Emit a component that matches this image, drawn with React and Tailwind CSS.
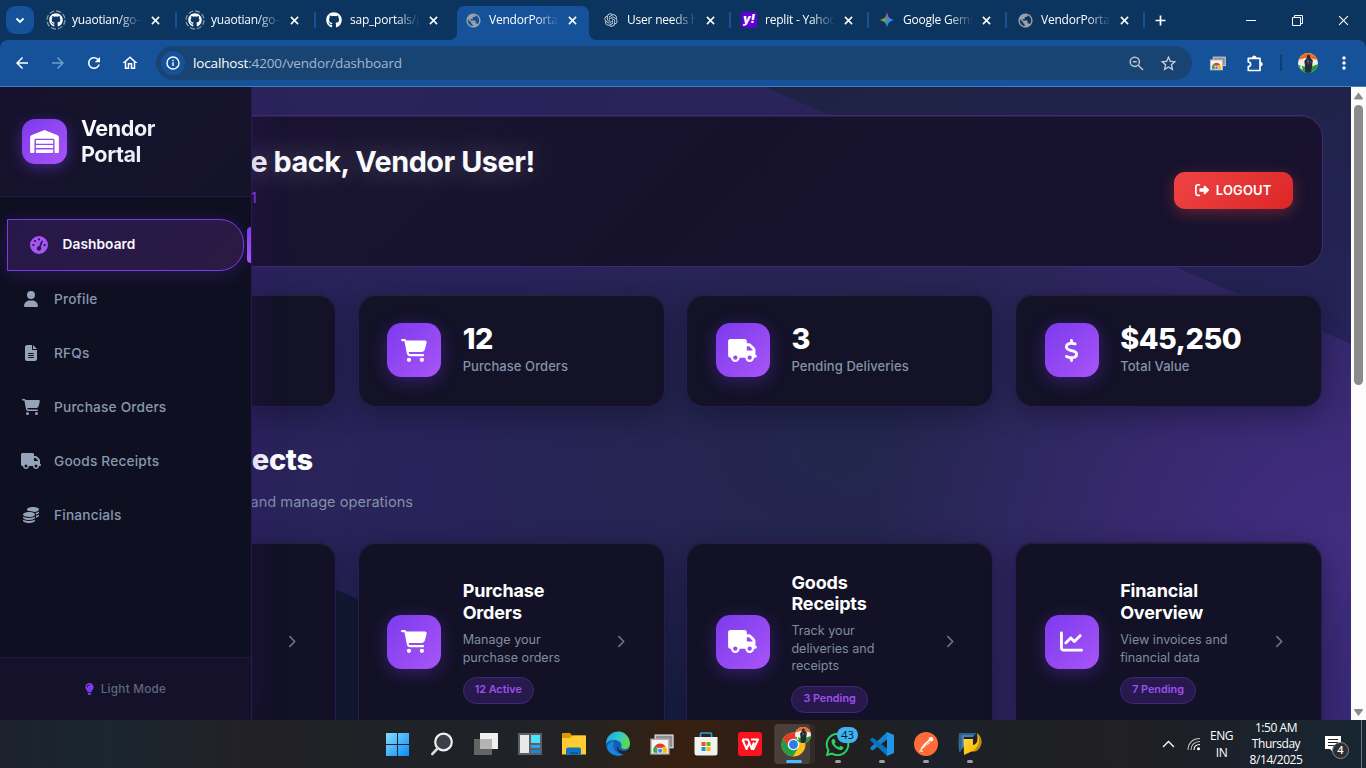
import React from "react";
import {
  FaWarehouse, FaGaugeHigh, FaUser, FaFileLines, FaCartShopping, FaTruck, FaCoins,
  FaLightbulb, FaRightFromBracket, FaDollarSign, FaChartLine, FaChevronRight, FaGithub, FaWhatsapp,
} from "react-icons/fa6";
import { RiOpenaiFill } from "react-icons/ri";
import { MdArrowBack, MdArrowForward, MdRefresh, MdOutlineHome, MdStarBorder, MdMoreVert, MdPublic } from "react-icons/md";

const ui = "font-['Open_Sans','Noto_Sans',sans-serif]";

function GithubRing() {
  return (
    <span className="relative flex size-5 items-center justify-center">
      <svg className="absolute inset-0" viewBox="0 0 20 20" width="20" height="20">
        <circle cx="10" cy="10" r="9" fill="none" stroke="#7f99b5" strokeWidth="1.3" strokeDasharray="5 2.07" />
      </svg>
      <FaGithub className="size-[14px] text-white" />
    </span>
  );
}

function Yahoo() {
  return (
    <span className="flex size-4 items-center justify-center bg-[#5f01d1] font-['Inter',sans-serif] text-[12px] leading-none font-black text-white italic">
      <span className="-mt-0.5">y!</span>
    </span>
  );
}

function Gemini() {
  return (
    <svg width="16" height="16" viewBox="0 0 16 16">
      <defs>
        <linearGradient id="gm" x1="0" y1="0" x2="1" y2="0">
          <stop offset="0.1" stopColor="#fbbc04" />
          <stop offset="0.4" stopColor="#34a87a" />
          <stop offset="0.6" stopColor="#3186ff" />
          <stop offset="1" stopColor="#4f8dff" />
        </linearGradient>
        <linearGradient id="gm2" x1="0" y1="0" x2="0" y2="1">
          <stop offset="0.1" stopColor="#f4453b" />
          <stop offset="0.5" stopColor="#f4453b" stopOpacity="0" />
        </linearGradient>
      </defs>
      <path d="M8 0.5C8.7 5 11 7.3 15.5 8 11 8.7 8.7 11 8 15.5 7.3 11 5 8.7 0.5 8 5 7.3 7.3 5 8 0.5Z" fill="url(#gm)" />
      <path d="M8 0.5C8.7 5 11 7.3 15.5 8 11 8.7 8.7 11 8 15.5 7.3 11 5 8.7 0.5 8 5 7.3 7.3 5 8 0.5Z" fill="url(#gm2)" />
    </svg>
  );
}

const Globe = () => <MdPublic className="size-[17px] text-[#9aa0a6]" />;

const tabs = [
  { t: "yuaotian/go-c", i: <GithubRing />, w: "w-[139px]", sep: false },
  { t: "yuaotian/go-c", i: <GithubRing />, w: "w-[139px]", sep: true },
  { t: "sap_portals/pr", i: <FaGithub className="size-4 text-white" />, w: "w-[139px]", sep: true },
  { t: "VendorPortal", i: <Globe />, w: "w-[138px]", active: true },
  { t: "User needs he", i: <RiOpenaiFill className="size-4 text-[#c5d0dc]" />, w: "w-[138px]" },
  { t: "replit - Yahoo", i: <Yahoo />, w: "w-[138px]", sep: true },
  { t: "Google Gemini", i: <Gemini />, w: "w-[138px]", sep: true },
  { t: "VendorPortal", i: <Globe />, w: "w-[138px]", sep: true },
];

function Cross({ s = 9, w = 1.7 }) {
  return (
    <svg width={s} height={s} viewBox="0 0 10 10">
      <path d="M1 1L9 9M9 1L1 9" stroke="#fff" strokeWidth={w} />
    </svg>
  );
}

function TabStrip() {
  return (
    <div className="flex h-10 shrink-0 items-stretch bg-[#0b345f] text-white">
      <div className="flex w-[37px] items-center pl-1.5">
        <div className="flex h-7 w-7 items-center justify-center rounded-[9px] bg-[#15529a]">
          <svg width="10" height="7" viewBox="0 0 10 7"><path d="M1.5 1.5L5 5L8.5 1.5" fill="none" stroke="#fff" strokeWidth="1.8" /></svg>
        </div>
      </div>
      {tabs.map((tab, k) => (
        <div key={k} className={"relative flex shrink-0 items-center " + tab.w}>
          {tab.sep && <span className="absolute top-3 left-[-1px] h-4 w-[2px] bg-[#15529a]" />}
          {tab.active && (
            <svg className="absolute bottom-0 left-[-5px]" width="148" height="34" viewBox="0 0 148 34">
              <path d="M0 34C5 34 8 31 8 26V8Q8 0 16 0H132Q140 0 140 8V26C140 31 143 34 148 34Z" fill="#15529a" />
            </svg>
          )}
          <span className="relative ml-[9px] flex w-5 items-center justify-center">{tab.i}</span>
          <span className={"relative ml-[6px] w-[70px] overflow-hidden text-[12px] tracking-[-0.22px] whitespace-nowrap [mask-image:linear-gradient(to_right,black_65%,transparent_100%)] " + ui}>
            {tab.t}
          </span>
          <span className="relative ml-[9px] flex items-center"><Cross /></span>
        </div>
      ))}
      <div className="relative flex w-[33px] items-center justify-center">
        <span className="absolute top-3 left-[-1px] h-4 w-[2px] bg-[#15529a]" />
        <svg width="11" height="11" viewBox="0 0 11 11"><path d="M5.5 0.5V10.5M0.5 5.5H10.5" stroke="#fff" strokeWidth="1.7" /></svg>
      </div>
      <div className="ml-auto flex">
        <div className="flex w-[46px] items-center justify-center"><span className="h-px w-[10px] bg-white" /></div>
        <div className="flex w-[46px] items-center justify-center">
          <svg width="11" height="11" viewBox="0 0 11 11" fill="none" stroke="#fff"><path d="M.5 2.5H8.5V10.5H.5ZM2.5 2.5V.5H10.5V8.5H8.5" /></svg>
        </div>
        <div className="flex w-[46px] items-center justify-center"><Cross s={11} w={1} /></div>
      </div>
    </div>
  );
}

function ChromeSnap({ size = 18 }) {
  return (
    <svg width={size} height={size} viewBox="0 0 24 24">
      <rect x="6" y="3" width="17" height="12" fill="#8f8f8f" stroke="#d2d2d2" strokeWidth="1.4" />
      <rect x="2" y="7" width="17" height="14" fill="#f4f4f4" stroke="#b5b5b5" strokeWidth="1.4" />
      <path d="M4.500 20A6 6 0 0 1 6 13.200L9.500 17.500L8.500 20Z" fill="#34a853" />
      <path d="M5.500 13.800A6.200 6.200 0 0 1 15.800 13.800L10.500 16Z" fill="#e5392e" />
      <path d="M15.800 13.800A6 6 0 0 1 16.800 20H12V15Z" fill="#fbbc04" />
      <circle cx="10.700" cy="18" r="2.500" fill="#4285f4" stroke="#fff" strokeWidth=".8" />
    </svg>
  );
}

function Avatar({ size }) {
  return (
    <svg width={size} height={size} viewBox="0 0 20 20">
      <defs><clipPath id={"av" + size}><circle cx="10" cy="10" r="10" /></clipPath></defs>
      <g clipPath={"url(#av" + size + ")"}>
        <rect width="20" height="20" fill="#f3efe8" />
        <path d="M0 0H20V7L13 5.500L7 5L0 7Z" fill="#ef6c1a" />
        <path d="M0 12L6 13.500H14L20 11V20H0Z" fill="#1f9a2c" />
        <path d="M3 11L5 17L2 15Z" fill="#eef5e8" />
        <path d="M9 2.500Q10.500 1 12 2.500L12.300 5L14.800 7L14.200 13L12.800 20H7.200L7 13L6.300 8L8.800 5Z" fill="#262a38" />
        <path d="M9 6L11 8L10 12Z" fill="#65708a" />
        <path d="M12 7L13.500 9L12.500 11Z" fill="#4b546c" />
      </g>
    </svg>
  );
}

function Toolbar() {
  return (
    <div className="flex h-[47px] shrink-0 items-center rounded-t-lg border-b border-[#4a7db8] bg-[#15529a] text-white">
      <div className="flex items-center gap-[18px] pl-[13px] text-[18px]">
        <MdArrowBack /><MdArrowForward className="text-[#6f9ccb]" /><MdRefresh /><MdOutlineHome />
      </div>
      <div className="ml-[17px] flex h-[34px] w-[1036px] items-center rounded-full bg-[#184474] pl-[5px]">
        <span className="flex size-6 items-center justify-center rounded-full bg-[#15529a]">
          <svg width="14" height="14" viewBox="0 0 14 14"><circle cx="7" cy="7" r="6" fill="none" stroke="#fff" strokeWidth="1.4" /><path d="M7 6.2V10M7 3.8V5.2" stroke="#fff" strokeWidth="1.4" /></svg>
        </span>
        <span className={"ml-2 text-[13.5px] tracking-[-0.15px] whitespace-nowrap text-[#a3b7cf] " + ui}>
          <span className="text-white">localhost</span>:4200/vendor/dashboard
        </span>
        <svg className="ml-auto" width="15" height="15" viewBox="0 0 15 15" fill="none" stroke="#b9c4d1" strokeWidth="1.500">
          <circle cx="5.800" cy="5.800" r="4.600" /><path d="M9.200 9.200L14 14M3.800 5.800H7.800" />
        </svg>
        <MdStarBorder className="mr-[14px] ml-[15px] size-[19px] text-[#c8d0da]" />
      </div>
      <span className="ml-[17px]"><ChromeSnap size={17} /></span>
      <svg className="ml-[21px]" width="17" height="17" viewBox="0 0 17 17" fill="none" stroke="#fff" strokeWidth="1.700" strokeLinejoin="round">
        <path d="M1.300 3.300H13V15.500H1.300V11.600A2.300 2.300 0 0 0 1.300 7Z" />
        <path d="M5.300 3A1.900 2 0 0 1 9.100 3ZM13.300 7.300A2 1.900 0 0 1 13.300 11.100Z" fill="#fff" strokeWidth="1" />
      </svg>
      <span className="ml-[16px] h-4 w-[2px] bg-[#0f3d70]" />
      <span className="ml-[16px]"><Avatar size={20} /></span>
      <MdMoreVert className="ml-[16px] size-5" />
    </div>
  );
}

const navItems = [
  { t: "Profile", I: FaUser, c: "size-4" },
  { t: "RFQs", I: FaFileLines, c: "size-4" },
  { t: "Purchase Orders", I: FaCartShopping, c: "h-4 w-[18px]" },
  { t: "Goods Receipts", I: FaTruck, c: "h-4 w-5" },
  { t: "Financials", I: FaCoins, c: "h-4 w-4" },
];

function Sidebar() {
  return (
    <aside className="absolute top-0 left-0 z-10 flex h-full w-[252px] flex-col overflow-hidden border-r border-[#281c4c] bg-[#0f0f22] shadow-[4px_0_30px_rgba(60,20,120,0.25)]">
      <div className="flex h-[110px] shrink-0 items-center gap-[14px] border-b border-[#231846] bg-[linear-gradient(135deg,#16122d,#15132a)] pl-[22px]">
        <div className="flex size-[45px] items-center justify-center rounded-[13px] bg-[linear-gradient(135deg,#7c3aed,#a855f7)] shadow-[0_4px_14px_rgba(124,58,237,0.45)]">
          <FaWarehouse className="h-[23px] w-[29px] text-white" />
        </div>
        <div className="-mt-[2px] bg-[linear-gradient(135deg,#ffffff,#e2e8f0)] bg-clip-text text-[21.6px] leading-[26px] font-bold tracking-[-0.45px] text-transparent">
          Vendor<br />Portal
        </div>
      </div>
      <nav className="flex flex-1 flex-col pt-[22px]">
        <div className="flex items-center">
          <div className="ml-[7px] flex h-[52px] w-[237px] items-center rounded-r-[24px] border border-[#7c3aed] bg-[linear-gradient(135deg,#27184a,#2b1a43)] pl-[22px] shadow-[0_4px_18px_rgba(124,58,237,0.2)]">
            <FaGaugeHigh className="size-[18px] text-[#a855f7]" />
            <span className="-mt-[1px] ml-[14.500px] text-[13.7px] font-semibold tracking-[0.08px] text-[#f8fafc]">Dashboard</span>
          </div>
          <div className="ml-[3px] h-9 w-1 rounded-l bg-[linear-gradient(180deg,#7c3aed,#a855f7)]" />
        </div>
        <div className="mt-[1px] flex flex-col">
          {navItems.map(({ t, I, c }) => (
            <div key={t} className="flex h-[54px] items-center pl-[20px] text-[#94a3b8]">
              <span className="flex w-[21px] justify-center"><I className={c} /></span>
              <span className="ml-[13px] text-[13.7px] font-medium tracking-[0.18px] text-[#8897ac]">{t}</span>
            </div>
          ))}
        </div>
      </nav>
      <div className="flex h-[63px] shrink-0 items-center justify-center gap-[7px] border-t border-[#231846] bg-[#15112a]">
        <FaLightbulb className="-mt-[1px] h-3 w-[9px] text-[#7c3aed]" />
        <span className="pt-[1px] text-[11.7px] font-medium tracking-[0.28px] text-[#5d6a80]">Light Mode</span>
      </div>
    </aside>
  );
}

function Tile({ children }) {
  return (
    <div className="flex size-[54px] shrink-0 items-center justify-center rounded-[14.4px] bg-[linear-gradient(135deg,#7c3aed,#a855f7)] text-white shadow-[0_4px_18px_rgba(124,58,237,0.35)]">
      {children}
    </div>
  );
}

const stats = [
  { n: "8", l: "RFQs", i: <FaFileLines className="size-6" /> },
  { n: "12", l: "Purchase Orders", i: <FaCartShopping className="h-[23px] w-[26px]" /> },
  { n: "3", l: "Pending Deliveries", i: <FaTruck className="h-[23px] w-[29px]" /> },
  { n: "$45,250", l: "Total Value", i: <FaDollarSign className="h-[23px] w-[15px]" /> },
];

const actions = [
  { t: "RFQs", d: "View and respond", b: "8 Open", i: <FaFileLines className="size-6" /> },
  { t: "Purchase Orders", d: "Manage your purchase orders", b: "12 Active", i: <FaCartShopping className="h-[23px] w-[26px]" /> },
  { t: "Goods Receipts", d: "Track your deliveries and receipts", b: "3 Pending", i: <FaTruck className="h-[23px] w-[29px]" /> },
  { t: "Financial Overview", d: "View invoices and financial data", b: "7 Pending", i: <FaChartLine className="h-[23px] w-[23px]" /> },
];

const cardCls = "border border-[#2b1b54] rounded-[18px] shadow-[0_8px_28px_rgba(10,10,25,0.4),inset_0_1px_0_rgba(255,255,255,0.08)]";

function Backdrop() {
  return (
    <div className="absolute inset-0 bg-[radial-gradient(ellipse_480px_420px_at_100%_72%,#432d82_0%,transparent_100%),radial-gradient(ellipse_420px_260px_at_62%_58%,#22264c_0%,transparent_100%),radial-gradient(ellipse_300px_160px_at_50%_100%,#171f42_0%,transparent_100%),linear-gradient(100deg,#2c2459_0%,#28235a_35%,#2b2458_75%,#27245a_100%)]">
      <svg className="absolute inset-0" width="1351" height="633" viewBox="0 0 1351 633">
        <defs>
          <linearGradient id="wedge" x1="0" y1="0" x2="1" y2="1">
            <stop offset="0" stopColor="#1e2345" />
            <stop offset="0.5" stopColor="#1f2349" />
            <stop offset="1" stopColor="#26235a" />
          </linearGradient>
        </defs>
        <path d="M765 0L1351 257V0Z" fill="url(#wedge)" />
        <path d="M250 466L640 633H250Z" fill="#131c36" />
        <path d="M1351 503L1295 633H1351Z" fill="#39297a" opacity="0.6" />
      </svg>
    </div>
  );
}

function Content() {
  return (
    <main className="relative h-full w-[1351px] shrink-0 overflow-hidden bg-[#28235a]">
      <Backdrop />
      <div className="relative pt-[28px] pr-[28.8px] pl-[28.8px]">
        <header className="mr-[-0.5px] flex h-[152px] items-center justify-between rounded-[22px] border border-[#40287a] bg-[linear-gradient(135deg,#1b1434,#16122c_50%,#18122e)] pr-[28.8px] shadow-[inset_0_1px_0_rgba(255,255,255,0.08)]">
          <div className="w-[505px] self-start pt-[26px]">
            <h1 className="text-right text-[28.8px] leading-[40px] font-bold tracking-[-0.45px] whitespace-nowrap text-[#f8fafc] [text-shadow:0_0_30px_rgba(255,255,255,0.35)]">Welcome back, Vendor User!</h1>
            <p className="w-[227px] pt-[5px] text-right text-[14.4px] leading-[22px] font-medium whitespace-nowrap text-[#7c3aed]">Vendor ID: 0000100001</p>
          </div>
          <button className="-mt-[2px] flex h-[37px] w-[119px] items-center justify-center gap-[6.500px] rounded-[10.8px] bg-[linear-gradient(135deg,#ef4444,#dc2626)] text-[13px] font-semibold tracking-[0.15px] text-white shadow-[0_4px_15px_rgba(239,68,68,0.35)]">
            <FaRightFromBracket className="size-[14px]" /><span className="pt-[1px]">LOGOUT</span>
          </button>
        </header>
        <section className="mt-[27.4px] grid grid-cols-4 gap-[21.6px]">
          {stats.map((s) => (
            <div key={s.l} className={"flex h-[113px] items-center gap-[21.6px] bg-[#131227] pb-[1px] pl-[28.5px] " + cardCls}>
              <Tile>{s.i}</Tile>
              <div>
                <div className="text-[28.8px] leading-[32px] font-extrabold tracking-[-0.45px] text-white">{s.n}</div>
                <div className="text-[13px] leading-[23px] font-medium tracking-[0.08px] text-[#8593a8]">{s.l}</div>
              </div>
            </div>
          ))}
        </section>
        <section>
          <h2 className="mt-[34.6px] w-[284px] text-right text-[29px] leading-[36px] font-extrabold tracking-[-0.3px] whitespace-nowrap text-white">Business Objects</h2>
          <p className="mt-[13px] w-[384.2px] text-right text-[14.6px] leading-[22px] whitespace-nowrap text-[#8290a8]">Access your vendor data and manage operations</p>
          <div className="mt-[29px] grid grid-cols-4 gap-[21.6px]">
            {actions.map((a) => (
              <div key={a.t} className={"flex h-[198px] items-center bg-[#121125] pt-[1.5px] pr-[23px] pl-[28.5px] " + cardCls}>
                <Tile>{a.i}</Tile>
                <div className="mt-[1px] ml-[21.6px] w-[116px] shrink-0">
                  <h3 className="text-[18px] leading-[21.6px] font-bold tracking-[-0.15px] text-white">{a.t}</h3>
                  <p className="mt-[7.5px] text-[12.6px] leading-[17.5px] text-[#7f8ca1]">{a.d}</p>
                  <span className="mt-[11px] inline-flex h-[27px] items-center rounded-full border border-[#43277e] bg-[#28194c] px-[11px] text-[10.8px] font-semibold text-[#9d4ff0]">{a.b}</span>
                </div>
                <FaChevronRight className="mr-[15.5px] ml-auto h-[13px] w-[9px] text-[#64748b]" />
              </div>
            ))}
          </div>
        </section>
      </div>
    </main>
  );
}

function Scrollbar() {
  return (
    <div className="flex w-[15px] shrink-0 flex-col items-center bg-[#fcfcfc]">
      <svg className="mt-[5px] shrink-0" width="9" height="8" viewBox="0 0 9 8"><path d="M4.5 0.5L9 6.5Q9 7.5 8 7.5H1Q0 7.5 0 6.5Z" fill="#8b8b8b" /></svg>
      <div className="mt-[5px] h-[280px] w-[9px] shrink-0 rounded-full bg-[#8b8b8b]" />
      <svg className="mt-auto mb-[4px] shrink-0" width="9" height="7" viewBox="0 0 9 7"><path d="M4.5 7L9 1Q9 0 8 0H1Q0 0 0 1Z" fill="#8b8b8b" /></svg>
    </div>
  );
}

const taskIcons = [
  <svg width="23" height="23" viewBox="0 0 23 23"><defs><linearGradient id="w" x1="0" y1="0" x2="1" y2="1"><stop stopColor="#84dcff" /><stop offset="1" stopColor="#0a8cf5" /></linearGradient></defs><path d="M0 0H11V11H0ZM12 0H23V11H12ZM0 12H11V23H0ZM12 12H23V23H12Z" fill="url(#w)" /></svg>,
  <svg width="24" height="24" viewBox="0 0 24 24"><circle cx="13.500" cy="10" r="8.300" fill="#3b3f47" stroke="#f1f1f1" strokeWidth="2.200" /><path d="M7.500 16.500L2.300 22" stroke="#d9d9d9" strokeWidth="2.600" strokeLinecap="round" /></svg>,
  <svg width="24" height="24" viewBox="0 0 24 24"><rect x="6" y="1" width="18" height="16" fill="#efefef" /><rect x="0" y="7" width="18" height="16" fill="#6a6a6a" fillOpacity=".92" /><rect x="6" y="7" width="12" height="10" fill="#b4b4b4" /></svg>,
  <svg width="24" height="24" viewBox="0 0 24 24"><rect x="0" y="1" width="24" height="22" fill="#5d5f62" /><rect x="2" y="3" width="9" height="18" fill="#e8e8ea" /><rect x="13" y="3" width="9" height="8" fill="#4be3ff" /><rect x="13" y="13" width="9" height="3" fill="#2ea5e6" /><rect x="13" y="18" width="9" height="3" fill="#1b86dd" /></svg>,
  <svg width="24" height="24" viewBox="0 0 24 24"><path d="M0 2Q0 1 1 1H8L10 3.5H23Q24 3.5 24 5V10H0Z" fill="#e09a00" /><path d="M0 6H8L10.500 3.500H24V22.500H0Z" fill="#ffcc33" /><path d="M4 22.500V17.500Q4 15.500 6 15.500H17Q19 15.500 19 17.500V22.500Z" fill="#0f72c4" /><path d="M8 22.500V20H16V22.500Z" fill="#0a5ba3" /></svg>,
  <svg width="26" height="26" viewBox="0 0 24 24"><defs><linearGradient id="e" x1="0" y1="0" x2="1" y2="0.3"><stop stopColor="#1f9fe6" /><stop offset=".55" stopColor="#2fc6d0" /><stop offset="1" stopColor="#5fd84e" /></linearGradient></defs><circle cx="12" cy="12" r="11" fill="#0f62b8" /><path d="M1 11A11 11 0 0 1 23 12C23 16 19.500 17 17 16.500C14 16 15.500 14.500 15.200 12.500C14.600 9.500 11 8 7.500 8.300C4 8.600 2 10 1 12Z" fill="url(#e)" /><path d="M7.500 13C7.500 19 12 21.500 16.500 21.200C11 24.500 4 21.500 2 16C2 12.500 4.500 10 8.500 9.500Q7.500 11 7.500 13Z" fill="#1a85da" /><path d="M11.500 13.500C11.500 18 17 20 21.800 17.200L23.500 18.200L20 21C15 22.500 9.500 18 11.500 13.500Z" fill="#2a201a" /></svg>,
  <ChromeSnap size={25} />,
  <svg width="24" height="24" viewBox="0 0 24 24"><path d="M6.500 6V2Q6.500 1 7.500 1H16.500Q17.500 1 17.500 2V6" fill="none" stroke="#17a6e4" strokeWidth="1.700" /><path d="M.5 5H23.500V21Q23.500 23.500 21 23.500H3Q.5 23.500 .5 21Z" fill="#f1f1f1" /><path d="M7.500 10H11.500V14H7.500Z" fill="#f25022" /><path d="M12.500 10H16.500V14H12.500Z" fill="#6fb310" /><path d="M7.500 15H11.500V19H7.500Z" fill="#1797e0" /><path d="M12.500 15H16.500V19H12.500Z" fill="#fdb700" /></svg>,
  <svg width="24" height="24" viewBox="0 0 24 24"><rect width="24" height="24" rx="3" fill="#fb1420" /><path d="M4.500 7.500H10L13.500 16.500L16 10.500M13 7.500H20L15.500 17H13M4.500 7.500L8.500 17L11 11.500" fill="none" stroke="#fff" strokeWidth="2" strokeLinejoin="round" /></svg>,
  <svg width="25" height="25" viewBox="0 0 24 24"><circle cx="12" cy="12" r="11.500" fill="#fbc116" /><path d="M2 6.300A11.500 11.500 0 0 1 22.300 6.800H12L6.500 14Z" fill="#e33b2e" /><path d="M2 6.300A11.500 11.500 0 0 0 11.500 23.500L16.500 15L7.400 14.200Z" fill="#259b48" /><circle cx="12" cy="12" r="5.500" fill="#fff" /><circle cx="12" cy="12" r="4.300" fill="#2b7ced" /></svg>,
  <FaWhatsapp className="size-[27px] text-[#25d366]" />,
  <svg width="24" height="24" viewBox="0 0 24 24"><path d="M17 0L24 3V21L17 24Z" fill="#2196e6" /><path d="M17 0L1 15L0 16.800L2.500 18.500L17 7.500Z" fill="#1583cf" /><path d="M17 24L1 9L0 7.500L2.500 5.500L17 16.500Z" fill="#0b71bb" /></svg>,
  <svg width="24" height="24" viewBox="0 0 24 24"><circle cx="12" cy="12" r="12" fill="#ff6c37" /><path d="M6 18.500L7.500 15L14 8.500L16 10.500L9.500 16Z" fill="#fff" /><circle cx="17" cy="7.300" r="2.300" fill="#fff" /><path d="M9 13.500L15.500 7.500M5.300 19H9" stroke="#fff" strokeWidth="1" /><path d="M10.500 14.500L15 10" stroke="#ff6c37" strokeWidth=".7" /></svg>,
  <svg width="24" height="24" viewBox="0 0 24 24"><defs><linearGradient id="yl" x1="0" y1="0" x2="1" y2="1"><stop stopColor="#ffe14a" /><stop offset=".6" stopColor="#ffc211" /><stop offset="1" stopColor="#e39a08" /></linearGradient></defs><path d="M1 1H18L15 5H6V14L2 20Q0 20 1 1Z" fill="#477fae" /><path d="M1 1H18L16.500 3H3.500V18L1.500 20Z" fill="#2b6290" /><path d="M5.500 7H15V13Q19.500 12 19.500 7Q19.500 3.500 19 1Q25 6 23 13Q20.500 20.500 13.500 19.500L6 23Z" fill="url(#yl)" /><path d="M19 1Q25 6 23 13Q21 19 15 19.500Q21.500 14 21 7Q20.500 3 19 1Z" fill="#8a5f14" opacity=".55" /></svg>,
];

function Taskbar() {
  return (
    <footer className={"flex h-12 shrink-0 bg-[linear-gradient(90deg,#1c222c_0%,#1a2630_8%,#222126_18%,#1f2226_28%,#1f2228_38%,#252320_43%,#372010_50%,#2f1e16_55%,#22201f_62%,#1b2029_68%,#1e2024_74%,#212022_82%,#1c2028_88%,#182733_100%)] pl-[375.500px] text-white " + ui}>
      {taskIcons.map((ic, k) => (
        <div key={k} className="relative flex w-11 shrink-0 items-center justify-center">
          {k === 9 && <span className="absolute top-1 left-[3px] h-10 w-10 rounded bg-white/5" />}
          {k === 9 && <span className="absolute top-1 left-[2.500px] h-10 w-9 rounded bg-white/10" />}
          <span className="relative">{ic}</span>
          {k === 9 && <span className="absolute top-[7px] right-[4.500px]"><Avatar size={16} /></span>}
          {k === 9 && <span className="absolute bottom-[5px] h-[3px] w-4 rounded-full bg-[#4cb8ff]" />}
          {k > 9 && <span className="absolute bottom-[5px] h-[3px] w-1.5 rounded-full bg-[#a0a0a2]" />}
          {k === 10 && <span className="absolute top-[7px] left-[21.500px] flex h-4 w-[21px] items-center justify-center rounded-full bg-[#3fb4f5] text-[11.500px] text-[#0a1722]">43</span>}
        </div>
      ))}
      <div className="ml-auto flex items-center">
        <svg width="13" height="8" viewBox="0 0 13 8"><path d="M1 7L6.500 1.500L12 7" fill="none" stroke="#fff" strokeWidth="1.300" /></svg>
        <svg className="ml-[12px]" width="14" height="14" viewBox="0 0 14 14" fill="none" stroke="#fff" strokeWidth="1.100"><path d="M1 13C1 6 6 1.500 13 1.500M4 13C4 8 7.500 4.500 13 4.500" opacity=".75" /><path d="M7 13C7 10 9 7.500 13 7.500" /><circle cx="11.500" cy="11.800" r="1.500" fill="#fff" stroke="none" /></svg>
        <div className="ml-[6.500px] w-[28px] text-center text-[12px] leading-[17px] tracking-[-0.4px]">ENG<br />IN</div>
        <div className="ml-[10.500px] w-[60px] text-center text-[12px] leading-[16px] tracking-[-0.45px] whitespace-nowrap">1:50 AM<br />Thursday<br />8/14/2025</div>
        <div className="relative ml-[19px] w-[36px]">
          <svg width="17" height="17" viewBox="0 0 17 17"><path d="M0 0H16V13H9V17L5 13H0Z" fill="#fff" /><path d="M3 3.500H13M3 6.500H13M3 9.500H10" stroke="#222" /></svg>
          <span className="absolute top-[6px] left-[7px] flex size-[17px] items-center justify-center rounded-full border border-[#8b8b8b] bg-[#2c2e32] text-[11px] font-semibold">4</span>
        </div>
        <span className="mr-[4px] h-12 w-px bg-[#6d7378]" />
      </div>
    </footer>
  );
}

export default function App() {
  return (
    <div className="flex h-[768px] w-[1366px] flex-col overflow-hidden bg-[#0b345f] font-['Inter',sans-serif]">
      <TabStrip />
      <Toolbar />
      <div className="relative flex min-h-0 flex-1 overflow-hidden">
        <Content />
        <Scrollbar />
        <Sidebar />
      </div>
      <Taskbar />
    </div>
  );
}
